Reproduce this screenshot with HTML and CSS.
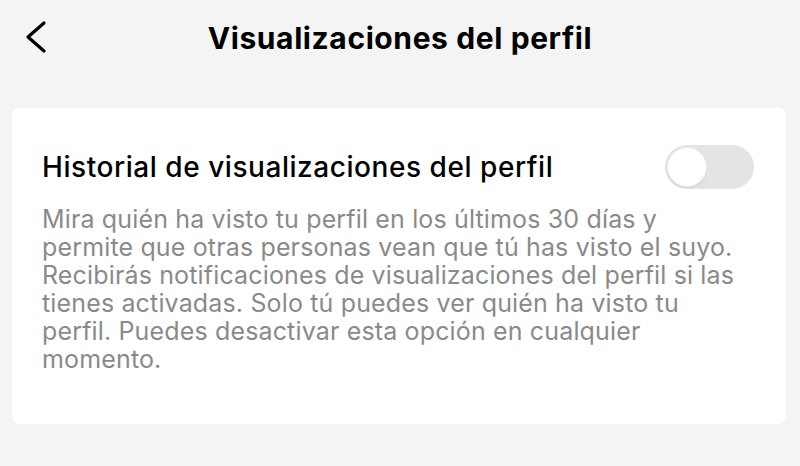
FILE: index.html
```html
<!DOCTYPE html>
<html lang="es">
<head>
<meta charset="utf-8">
<title>Visualizaciones del perfil</title>
<link rel="stylesheet" href="styles.css">
</head>
<body>
  <header class="topbar">
    <button class="back" aria-label="Atrás">
      <svg width="24" height="34" viewBox="0 0 24 34" fill="none" stroke="#000" stroke-width="3.2" stroke-linecap="round" stroke-linejoin="round">
        <path d="M20 3 L4 17 L20 31"/>
      </svg>
    </button>
    <h1 class="title">Visualizaciones del perfil</h1>
  </header>

  <section class="card">
    <div class="row">
      <h2 class="row-title">Historial de visualizaciones del perfil</h2>
      <span class="switch" role="switch" aria-checked="false"><span class="knob"></span></span>
    </div>
    <p class="desc">Mira quién ha visto tu perfil en los últimos 30 días y permite que otras personas vean que tú has visto el suyo. Recibirás notificaciones de visualizaciones del perfil si las tienes activadas. Solo tú puedes ver quién ha visto tu perfil. Puedes desactivar esta opción en cualquier momento.</p>
  </section>
</body>
</html>
```

FILE: styles.css
```css
* { box-sizing: border-box; }

html, body {
  margin: 0;
  padding: 0;
  background: #f4f4f4;
  font-family: Inter, "Liberation Sans", Arial, sans-serif;
  color: #000;
}

body {
  width: 800px;
  height: 466px;
  overflow: hidden;
}

.topbar {
  position: relative;
  height: 76px;
  display: flex;
  align-items: center;
  justify-content: center;
}

.back {
  position: absolute;
  left: 24px;
  top: 20px;
  padding: 0;
  border: 0;
  background: none;
  display: flex;
}

.title {
  margin: 0;
  font-size: 30px;
  font-weight: 700;
  letter-spacing: 0.6px;
}

.card {
  margin: 32px 14px 0 12px;
  height: 316px;
  background: #fff;
  border-radius: 8px;
  padding: 37px 32px 0 30px;
}

.row {
  display: flex;
  align-items: center;
  justify-content: space-between;
}

.row-title {
  margin: 0;
  font-size: 28px;
  font-weight: 500;
  letter-spacing: 0.55px;
}

.switch {
  width: 89px;
  height: 44px;
  border-radius: 22px;
  background: #e4e4e7;
  padding: 2px;
  display: flex;
  align-items: center;
}

.knob {
  width: 40px;
  height: 40px;
  border-radius: 50%;
  background: #fff;
  border: 1px solid #ececec;
  box-shadow: 0 1px 2px rgba(0,0,0,0.08);
}

.desc {
  margin: 16px 0 0;
  font-size: 25px;
  line-height: 28px;
  letter-spacing: 0.15px;
  color: #8a8a8a;
  max-width: 715px;
}
```
